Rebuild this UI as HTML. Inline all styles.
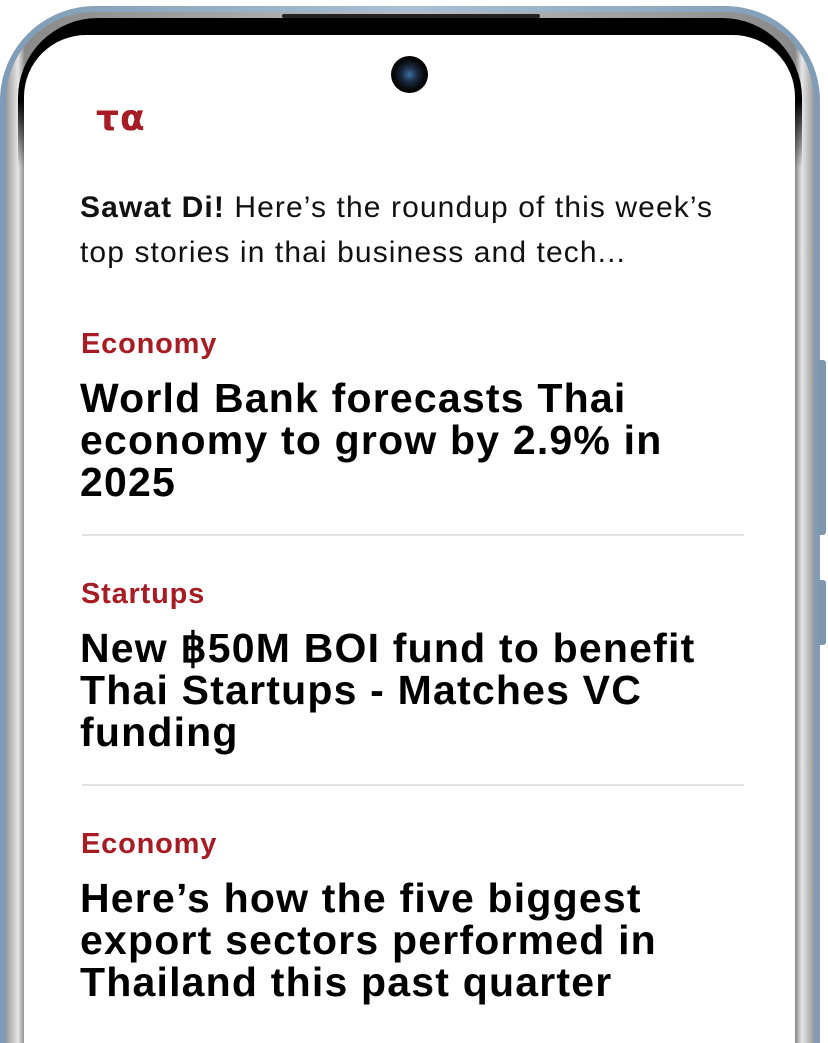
<!DOCTYPE html>
<html><head><style>
html,body{margin:0;padding:0;width:828px;height:1043px;overflow:hidden;background:#fff;font-family:"Liberation Sans",Arial,sans-serif}
#wrap{position:relative;width:828px;height:1043px;overflow:hidden}
.abs{position:absolute}
.frame{left:0;top:6px;width:820px;height:1037px;border-radius:95px 95px 0 0;background:linear-gradient(90deg,#7f9bb5,#a9c0d6 50%,#7f9bb5)}
.silver{left:6px;top:12px;width:808px;height:1031px;border-radius:88px 88px 0 0;background:linear-gradient(90deg,#9a9a9a,#e6e6e6 1.5%,#8a8a8a 2.3%,#bdbdbd 50%,#8a8a8a 97.7%,#e6e6e6 98.5%,#9a9a9a)}
.black{left:18px;top:18px;width:784px;height:150px;border-radius:80px 80px 0 0;background:linear-gradient(#000 55%,rgba(0,0,0,0))}
.screen{left:24px;top:35px;width:771px;height:1008px;border-radius:62px 62px 0 0;background:#fff}
.spk{left:282px;top:14px;width:258px;height:4px;border-radius:2px;background:#222}
.cam{left:391px;top:56px;width:37px;height:37px;border-radius:50%;background:radial-gradient(circle at 50% 50%,#3a6ea0 0,#1a2a40 30%,#050505 60%)}
.btn{left:818px;width:8px;background:#7f97ad;border-radius:0 3px 3px 0}
.logo{left:96px;top:98px;color:#a51c24;font-size:36px;font-weight:bold;font-family:"DejaVu Sans",sans-serif;letter-spacing:1px}
.intro{left:80px;top:185px;width:650px;font-size:30px;line-height:45px;color:#111;letter-spacing:1.1px}
.cat{left:81px;color:#a51c24;font-size:29px;font-weight:bold;letter-spacing:0.8px}
.h{left:80px;width:660px;font-size:41px;font-weight:bold;line-height:42px;color:#000;letter-spacing:1.2px}
.hr{left:82px;width:662px;height:2px;background:#e0e0e0}
</style></head><body><div id="wrap">
<div class="abs frame"></div>
<div class="abs btn" style="top:360px;height:175px"></div>
<div class="abs btn" style="top:580px;height:65px"></div>
<div class="abs silver"></div>
<div class="abs black"></div>
<div class="abs screen"></div>
<div class="abs spk"></div>
<div class="abs cam"></div>
<div class="abs logo">τα</div>
<div class="abs intro"><b>Sawat Di!</b> Here’s the roundup of this week’s top stories in thai business and tech...</div>
<div class="abs cat" style="top:328px">Economy</div>
<div class="abs h" style="top:377px">World Bank forecasts Thai economy to grow by 2.9% in 2025</div>
<div class="abs hr" style="top:534px"></div>
<div class="abs cat" style="top:578px">Startups</div>
<div class="abs h" style="top:627px">New ฿50M BOI fund to benefit Thai Startups - Matches VC funding</div>
<div class="abs hr" style="top:784px"></div>
<div class="abs cat" style="top:828px">Economy</div>
<div class="abs h" style="top:877px">Here’s how the five biggest export sectors performed in Thailand this past quarter</div>
</div></body></html>
